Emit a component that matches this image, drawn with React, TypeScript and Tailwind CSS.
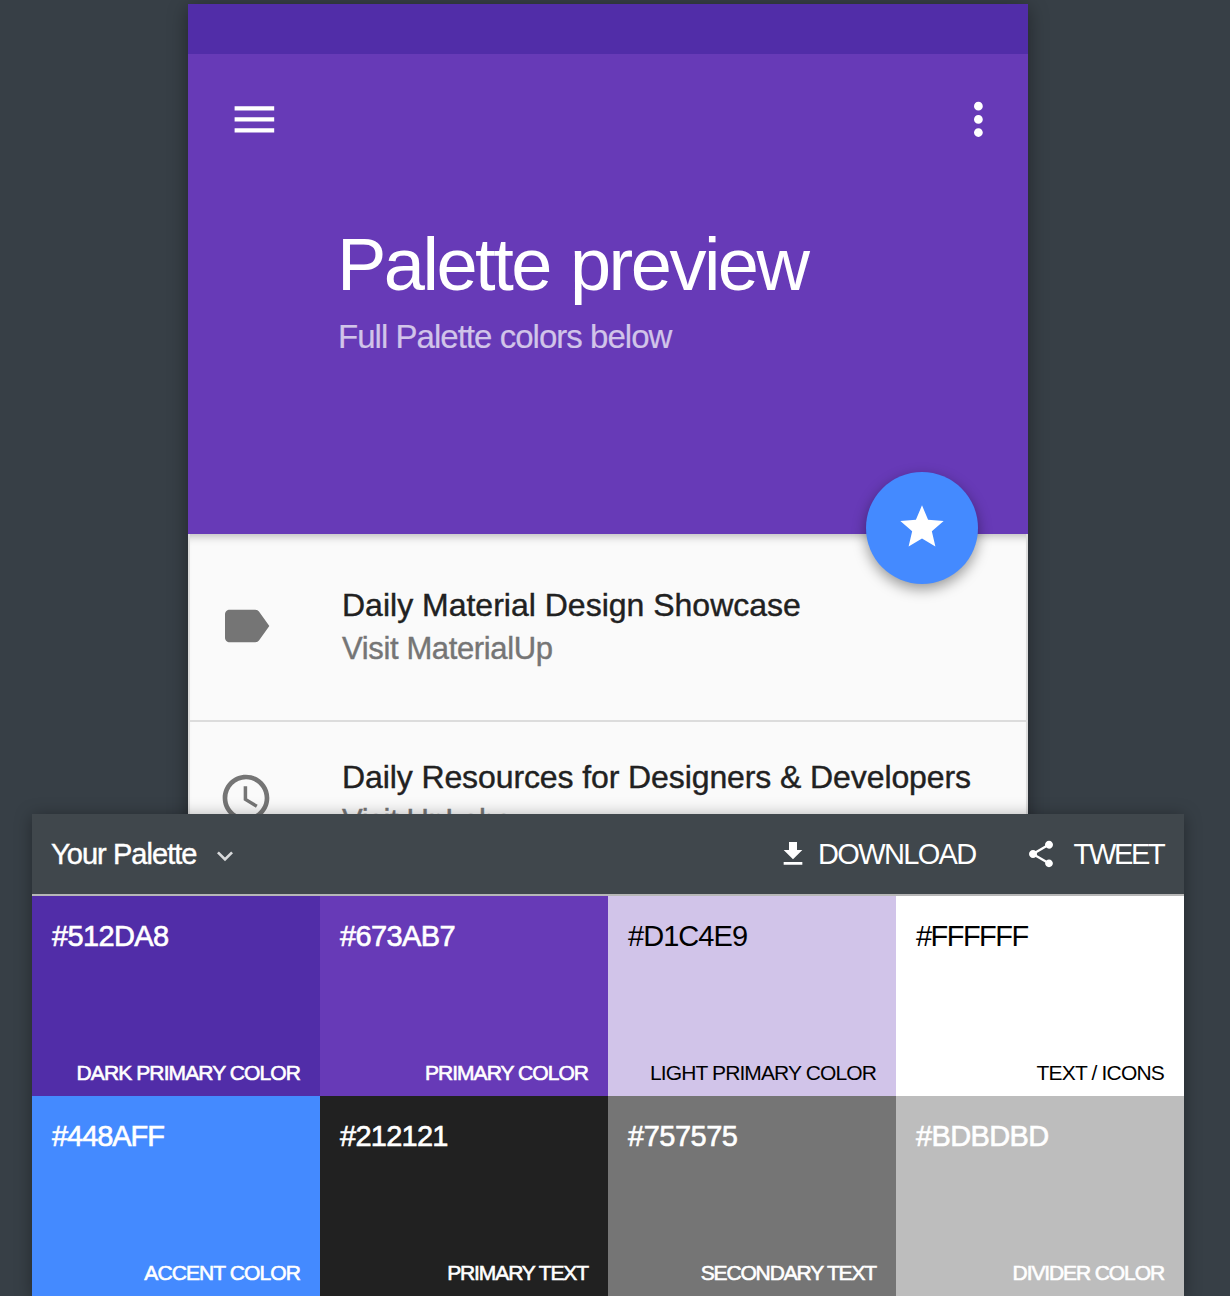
import type { ReactNode } from 'react';

const icons = {
  menu: 'M3 18h18v-2H3v2zm0-5h18v-2H3v2zm0-7v2h18V6H3z',
  more: 'M12 8c1.1 0 2-.9 2-2s-.9-2-2-2-2 .9-2 2 .9 2 2 2zm0 2c-1.1 0-2 .9-2 2s.9 2 2 2 2-.9 2-2-.9-2-2-2zm0 6c-1.1 0-2 .9-2 2s.9 2 2 2 2-.9 2-2-.9-2-2-2z',
  star: 'M12 17.27L18.18 21l-1.64-7.03L22 9.24l-7.19-.61L12 2 9.19 8.63 2 9.24l5.46 4.73L5.82 21z',
  label: 'M17.63 5.84C17.27 5.33 16.67 5 16 5L5 5.01C3.9 5.01 3 5.9 3 7v10c0 1.1.9 1.99 2 1.99L16 19c.67 0 1.27-.33 1.63-.84L22 12l-4.37-6.16z',
  clock: 'M11.99 2C6.47 2 2 6.48 2 12s4.47 10 9.99 10C17.52 22 22 17.52 22 12S17.52 2 11.99 2zM12 20c-4.42 0-8-3.58-8-8s3.58-8 8-8 8 3.58 8 8-3.58 8-8 8zm.5-13H11v6l5.25 3.15.75-1.23-4.5-2.67z',
  download: 'M19 9h-4V3H9v6H5l7 7 7-7zM5 18v2h14v-2H5z',
  share: 'M18 16.08c-.76 0-1.44.3-1.96.77L8.91 12.7c.05-.23.09-.46.09-.7s-.04-.47-.09-.7l7.05-4.11c.54.5 1.25.81 2.04.81 1.66 0 3-1.34 3-3s-1.34-3-3-3-3 1.34-3 3c0 .24.04.47.09.7L8.04 9.81C7.5 9.31 6.79 9 6 9c-1.66 0-3 1.34-3 3s1.34 3 3 3c.79 0 1.5-.31 2.04-.81l7.12 4.16c-.05.21-.08.43-.08.65 0 1.61 1.31 2.92 2.92 2.92 1.61 0 2.92-1.31 2.92-2.92s-1.31-2.92-2.92-2.92z',
  chevron: 'M16.59 8.59L12 13.17 7.41 8.59 6 10l6 6 6-6z',
};

function Icon({ name, className }: { name: keyof typeof icons; className: string }) {
  return (
    <svg viewBox="0 0 24 24" fill="currentColor" className={`shrink-0 ${className}`}>
      <path d={icons[name]} />
    </svg>
  );
}

function Row({ icon, title, subtitle }: { icon: ReactNode; title: ReactNode; subtitle: ReactNode }) {
  return (
    <div className="flex h-[172px] items-center pl-7">
      {icon}
      <div className="ml-[68px] pt-[2px] whitespace-nowrap">
        {title}
        {subtitle}
      </div>
    </div>
  );
}

const swatches = [
  { hex: '#512DA8', name: 'DARK PRIMARY COLOR', cls: 'bg-[#512da8] text-white [-webkit-text-stroke:0.6px]', h: 'tracking-[-0.65px]', n: 'tracking-[-0.9px]' },
  { hex: '#673AB7', name: 'PRIMARY COLOR', cls: 'bg-[#673ab7] text-white [-webkit-text-stroke:0.6px]', h: 'tracking-[-0.6px]', n: 'tracking-[-0.95px]' },
  { hex: '#D1C4E9', name: 'LIGHT PRIMARY COLOR', cls: 'bg-[#d1c4e9] text-black', h: 'tracking-[-0.95px]', n: 'tracking-[-0.88px]' },
  { hex: '#FFFFFF', name: 'TEXT / ICONS', cls: 'bg-white text-black', h: 'tracking-[-1.55px]', n: 'tracking-[-0.82px]' },
  { hex: '#448AFF', name: 'ACCENT COLOR', cls: 'bg-[#448aff] text-white [-webkit-text-stroke:0.6px]', h: 'tracking-[-1.05px]', n: 'tracking-[-0.9px]' },
  { hex: '#212121', name: 'PRIMARY TEXT', cls: 'bg-[#212121] text-white [-webkit-text-stroke:0.6px]', h: 'tracking-[-0.75px]', n: 'tracking-[-1.1px]' },
  { hex: '#757575', name: 'SECONDARY TEXT', cls: 'bg-[#757575] text-white [-webkit-text-stroke:0.6px]', h: 'tracking-[-0.5px]', n: 'tracking-[-1.15px]' },
  { hex: '#BDBDBD', name: 'DIVIDER COLOR', cls: 'bg-[#bdbdbd] text-white [-webkit-text-stroke:0.6px]', h: 'tracking-[-0.65px]', n: 'tracking-[-1.1px]' },
];

export default function App() {
  return (
    <div className="h-[1296px] w-[1230px] overflow-hidden bg-[#373f46] font-['Liberation_Sans',Arial,sans-serif]">
      <div className="h-[814px] overflow-hidden pt-1 pl-[188px]">
        <main className="h-[900px] w-[840px] bg-[#fafafa] shadow-[0_4px_18px_rgba(0,0,0,0.4)]">
          <div className="h-[50px] bg-[#512da8]" />
          <header className="relative h-[480px] bg-[#673ab7] text-white">
            <div className="flex justify-between pt-[39px] pr-[23.5px] pl-[39.5px]">
              <Icon name="menu" className="size-[52.8px]" />
              <Icon name="more" className="size-[52.8px]" />
            </div>
            <h1 className="mt-[79px] pl-[149px] text-[74px] leading-[80px] tracking-[-2.5px] whitespace-nowrap [word-spacing:2px]">Palette preview</h1>
            <p className="mt-3 pl-[150px] text-[33px] leading-10 tracking-[-0.97px] text-[#d1c4e9] [-webkit-text-stroke:0.2px]">Full Palette colors below</p>
            <button className="absolute right-[50px] bottom-[-50px] flex size-28 items-center justify-center rounded-full bg-[#448aff] shadow-[0_5px_14px_rgba(0,0,0,0.4)]">
              <Icon name="star" className="mb-0.5 size-[52px]" />
            </button>
          </header>
          <section className="border-x-2 border-[#dcdcdc] text-[#757575] shadow-[inset_0_10px_10px_-8px_rgba(0,0,0,0.28)]">
            <div className="h-[188px] border-b-2 border-[#dcdcdc] pt-[5.5px]">
              <Row
                icon={<Icon name="label" className="size-14" />}
                title={<h2 className="text-[32px] leading-[43px] text-[#212121] [-webkit-text-stroke:0.4px]">Daily Material Design Showcase</h2>}
                subtitle={<p className="text-[31px] leading-[43px] tracking-[-0.37px] [-webkit-text-stroke:0.4px]">Visit MaterialUp</p>}
              />
            </div>
            <div className="-mt-[10.5px]">
              <Row
                icon={<Icon name="clock" className="size-14" />}
                title={<h2 className="text-[32px] leading-[43px] tracking-[-0.1px] text-[#212121] [-webkit-text-stroke:0.4px]">Daily Resources for Designers &amp; Developers</h2>}
                subtitle={<p className="text-[31px] leading-[43px] tracking-[-0.37px] [-webkit-text-stroke:0.4px]">Visit UpLabs</p>}
              />
            </div>
          </section>
        </main>
      </div>
      <section className="relative ml-8 w-[1152px] shadow-[0_2px_16px_rgba(0,0,0,0.35)]">
        <div className="flex h-[82px] items-center border-b-2 border-[#b7b7b7] bg-[#40474c] pr-5 pl-[19px] text-[29px] whitespace-nowrap text-white">
          <span className="w-[157px] pt-0.5 tracking-[-0.95px] [-webkit-text-stroke:0.4px]">Your Palette</span>
          <Icon name="chevron" className="mt-1 ml-[0.5px] size-8 opacity-80" />
          <Icon name="download" className="ml-auto size-8" />
          <span className="ml-[9px] w-[158.5px] pt-0.5 tracking-[-1.65px]">DOWNLOAD</span>
          <Icon name="share" className="ml-12 size-8" />
          <span className="ml-[17px] w-[90.5px] pt-0.5 tracking-[-2.3px]">TWEET</span>
        </div>
        <div className="grid grid-cols-4">
          {swatches.map((s) => (
            <div key={s.hex} className={`flex h-[200px] flex-col justify-between px-5 pt-5 pb-2 ${s.cls}`}>
              <span className={`text-[29px] leading-10 ${s.h}`}>{s.hex}</span>
              <span className={`text-right text-[21px] leading-[30px] whitespace-nowrap ${s.n}`}>{s.name}</span>
            </div>
          ))}
        </div>
      </section>
    </div>
  );
}
